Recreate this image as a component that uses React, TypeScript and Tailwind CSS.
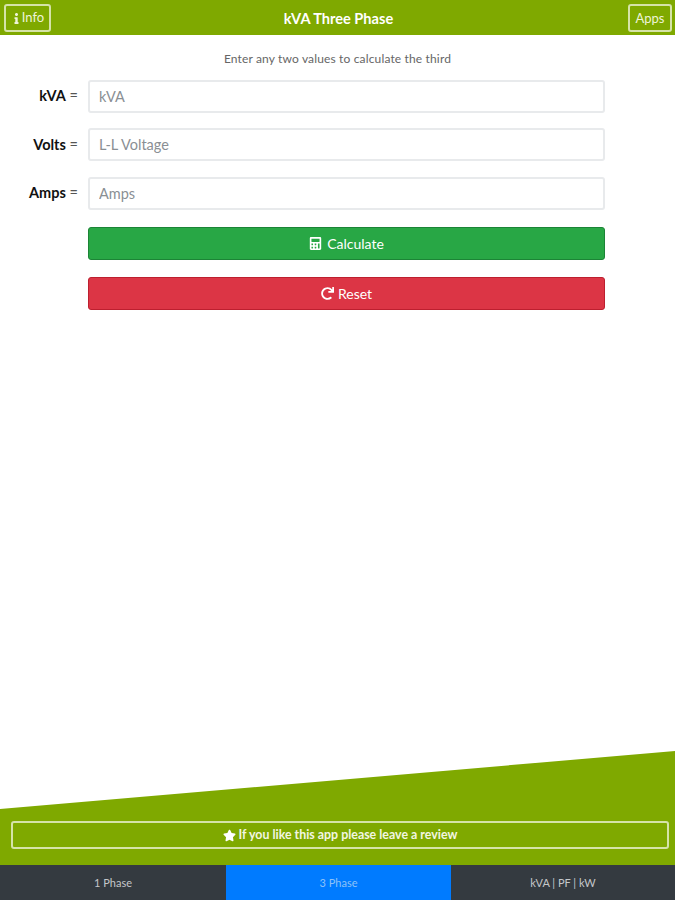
import { FaCalculator, FaRedo, FaStar, FaInfo } from "react-icons/fa";

function Field({ label, placeholder }: { label: string; placeholder: string }) {
  return (
    <div className="flex items-center h-[33px]">
      <div className="w-[88px] pr-[10px] text-right text-[14.5px] text-[#555]">
        <span className="font-bold text-[#111]">{label}</span> =
      </div>
      <input
        placeholder={placeholder}
        className="w-[517px] h-[33px] px-[9px] rounded-[3px] border-2 border-[#e8eaec] bg-white text-[14.5px] placeholder:text-[#8a8f94] outline-none"
      />
    </div>
  );
}

export default function App() {
  return (
    <div className="w-[675px] h-[900px] flex flex-col bg-white overflow-hidden font-['Lato','Open_Sans',sans-serif]">
      <header className="h-[35px] shrink-0 bg-[#7fa900] flex items-center justify-between pl-[4px] pr-[3px] pt-[2px]">
        <button className="h-[28px] w-[47px] -mt-[1px] border-2 border-[#d5e3a8] rounded-[3px] flex items-center justify-center text-[13px] text-[#eef4d8]">
          <FaInfo size={11} />
          Info
        </button>
        <h1 className="text-[14.6px] font-bold text-white pr-[2px]">kVA Three Phase</h1>
        <button className="h-[28px] w-[44px] -mt-[1px] border-2 border-[#d5e3a8] rounded-[3px] flex items-center justify-center pt-[1px] text-[13px] text-[#eef4d8]">
          Apps
        </button>
      </header>

      <main className="flex-1 flex flex-col">
        <p className="mt-[15px] h-[18px] leading-[18px] text-center text-[12px] tracking-[0.15px] text-[#666]">
          Enter any two values to calculate the third
        </p>
        <div className="mt-[11.6px] flex flex-col gap-[15.5px]">
          <Field label="kVA" placeholder="kVA" />
          <Field label="Volts" placeholder="L-L Voltage" />
          <Field label="Amps" placeholder="Amps" />
        </div>
        <div className="mt-[17px] ml-[88px] w-[517px] flex flex-col gap-[17px]">
          <button className="h-[33px] rounded-[3px] bg-[#28a745] border border-[#1c8436] text-white text-[14px] flex items-center justify-center gap-[5px]">
            <FaCalculator size={13} />
            Calculate
          </button>
          <button className="h-[33px] rounded-[3px] bg-[#dc3545] border border-[#bd1f2f] text-white text-[14px] flex items-center justify-center gap-[4px]">
            <FaRedo size={13} />
            Reset
          </button>
        </div>
      </main>

      <footer className="shrink-0">
        <svg viewBox="0 0 675 58" className="block w-[675px] h-[58px]">
          <polygon points="0,58 675,0 675,58 0,58" fill="#7fa900" />
        </svg>
        <div className="h-[56px] bg-[#7fa900] px-[11px] pt-[12px]">
          <button className="w-[658px] h-[28px] border-2 border-[#d5e3a8] rounded-[3px] flex items-center justify-center gap-[3px] text-[12.4px] font-bold text-[#f2f6e2]">
            <FaStar size={13} className="text-white" />
            If you like this app please leave a review
          </button>
        </div>
        <nav className="h-[35px] grid grid-cols-[226px_225px_224px] text-[11px]">
          <div className="bg-[#343a40] text-[#c4c7ca] flex items-center justify-center pt-[2px]">1 Phase</div>
          <div className="bg-[#007bff] text-[#8fc2f7] flex items-center justify-center pt-[2px]">3 Phase</div>
          <div className="bg-[#343a40] text-[#c4c7ca] flex items-center justify-center pt-[2px]">kVA | PF | kW</div>
        </nav>
      </footer>
    </div>
  );
}
